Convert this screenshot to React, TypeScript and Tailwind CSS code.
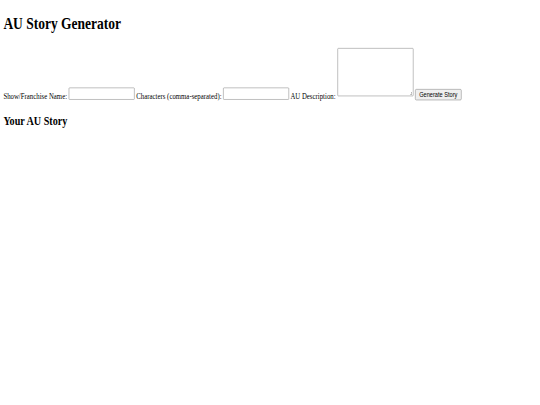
export default function App() {
  return (
    <div className="h-[405px] w-[540px] overflow-hidden bg-white">
      {/* page drawn at 1280x800 and squeezed into the window, like the reference shot */}
      <div className="h-[800px] w-[1280px] origin-top-left scale-x-[0.421875] scale-y-[0.50625] p-2 font-['Liberation_Serif',serif] text-[16px] leading-[normal] text-black">
        <h1 className="mt-[21.44px] mb-0 text-[32px] font-bold leading-[normal]">AU Story Generator</h1>
        <div className="mt-[28.6px] tracking-[0.06px]">
          <label>Show/Franchise Name:</label>{" "}
          <input
            type="text"
            className="h-[24px] w-[156px] rounded-[2px] border border-[#767676] px-[2px] py-[1px] align-[6px] font-['Liberation_Sans',Arial,sans-serif] text-[13.33px]"
          />{" "}
          <label>Characters (comma-separated):</label>{" "}
          <input
            type="text"
            className="h-[24px] w-[156px] rounded-[2px] border border-[#767676] px-[2px] py-[1px] align-[6px] font-['Liberation_Sans',Arial,sans-serif] text-[13.33px]"
          />{" "}
          <label>AU Description:</label>{" "}
          <textarea className="h-[95px] w-[180px] rounded-[2px] border border-[#767676] p-[2px] align-[5px] font-['Liberation_Mono',monospace] text-[13.33px]" />{" "}
          <button className="h-[22px] rounded-[3px] border border-[#767676] bg-[#efefef] px-[9px] py-[1px] align-[4px] font-['Liberation_Sans',Arial,sans-serif] text-[13.33px] leading-[normal] tracking-normal">
            Generate Story
          </button>
        </div>
        <h2 className="mt-[27px] mb-[19.92px] text-[24px] font-bold leading-[normal]">Your AU Story</h2>
        <div />
      </div>
    </div>
  );
}
